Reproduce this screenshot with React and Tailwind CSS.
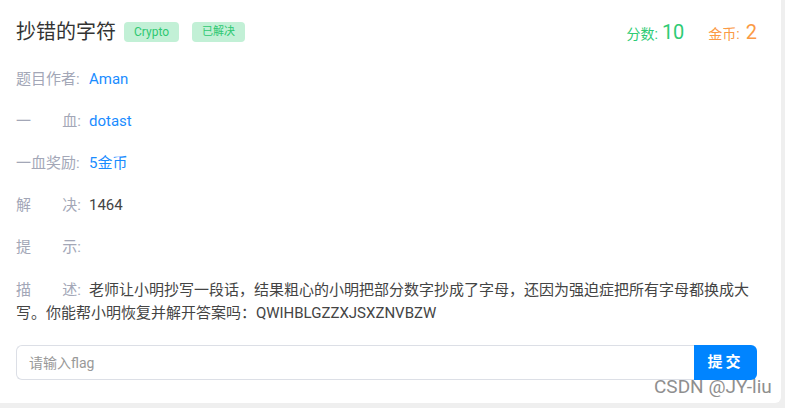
import React from "react";

const Label = ({ parts }) => (
  <span className="inline-flex w-[65px] justify-between mr-[8px] text-[#a3a7b7]">
    {parts.map((p) => (
      <span key={p}>{p}</span>
    ))}
  </span>
);

const rows = [
  { label: ["题目作者:"], value: "Aman", color: "text-[#1a8cff]" },
  { label: ["一", "血:"], value: "dotast", color: "text-[#1a8cff]" },
  { label: ["一血奖励:"], value: "5金币", color: "text-[#1a8cff]" },
  { label: ["解", "决:"], value: "1464", color: "text-[#444]" },
  { label: ["提", "示:"], value: "", color: "text-[#444]" },
];

export default function App() {
  return (
    <div
      className="relative w-[785px] h-[408px] bg-[#efefef] overflow-hidden"
      style={{ fontFamily: 'Roboto, "Noto Sans CJK SC", sans-serif' }}
    >
      <div className="w-[781px] h-[403px] bg-white rounded-br-[6px] pt-[16px] pl-[16px] pr-[24px]">
        <div className="flex items-center justify-between h-[32px]">
          <div className="flex items-center">
            <h1 className="text-[20px] text-[#333]">抄错的字符</h1>
            <span className="ml-[8px] h-[20px] px-[10px] flex items-center rounded-[4px] bg-[#c2f0d6] text-[#2ec872] text-[12px]">
              Crypto
            </span>
            <span className="ml-[13px] h-[20px] px-[10px] flex items-center rounded-[4px] bg-[#c2f0d6] text-[#2ec872] text-[11px]">
              已解决
            </span>
          </div>
          <div className="flex items-baseline">
            <span className="text-[14px] text-[#2ecb74]">分数:</span>
            <span className="ml-[4px] text-[20px] text-[#2ecb74]">10</span>
            <span className="ml-[24px] text-[14px] text-[#fb9a45]">金币:</span>
            <span className="ml-[6px] text-[20px] text-[#fb9a45]">2</span>
          </div>
        </div>

        <div className="mt-[10px] text-[15px]">
          {rows.map((r) => (
            <div key={r.label.join("")} className="flex items-center h-[42px] leading-[22px]">
              <Label parts={r.label} />
              <span className={r.color}>{r.value}</span>
            </div>
          ))}
          <p className="pt-[11px] pb-[10px] leading-[23px] text-[#444]">
            <Label parts={["描", "述:"]} />
            老师让小明抄写一段话，结果粗心的小明把部分数字抄成了字母，还因为强迫症把所有字母都换成大写。你能帮小明恢复并解开答案吗：QWIHBLGZZXJSXZNVBZW
          </p>
        </div>

        <div className="mt-[10px] flex h-[35px]">
          <input
            className="flex-1 h-full border border-[#dcdfe6] border-r-0 rounded-l-[6px] pl-[12px] text-[14px] outline-none placeholder:text-[#999]"
            placeholder="请输入flag"
          />
          <button className="w-[63px] h-full bg-[#0084ff] text-white text-[15px] font-bold tracking-[3px] rounded-r-[6px]">
            提交
          </button>
        </div>
      </div>

      <div className="absolute left-[654px] top-[373px] text-[19px] text-[#8f8f8f] pointer-events-none">
        CSDN @JY-liu
      </div>
    </div>
  );
}
